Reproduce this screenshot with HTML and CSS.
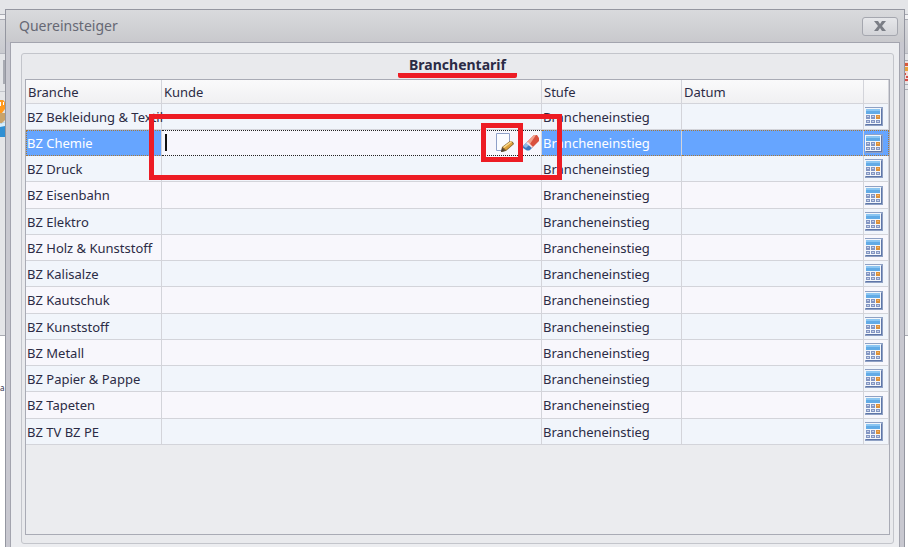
FILE: index.html
```html
<!DOCTYPE html>
<html lang="de">
<head>
    <meta charset="UTF-8">
    <meta name="viewport" content="width=device-width, initial-scale=1.0">
    <title>Quereinsteiger</title>
    <link rel="stylesheet" href="styles.css">
</head>
<body>
    <div class="backdrop left">
        <div class="ribbon"></div>
        <div class="field"></div>
        <svg class="app-icon" width="5" height="46" viewBox="0 0 5 46">
            <path d="M0 0h5v1H0z" fill="#c3c5cb"/>
            <path d="M0 9h3q2 1 2 3v6l-3 4H0z" fill="#ff9a1f"/>
            <path d="M0 11h1v4H0zM3 11h1v3H3z" fill="#fff"/>
            <path d="M0 22h5v7l-3 3H0z" fill="#c9a36a"/>
            <path d="M0 33l5-2v15H0z" fill="#2f8fd3"/>
            <path d="M0 33l5-2v4l-5 1z" fill="#d9eefb"/>
        </svg>
        <div class="document">a</div>
    </div>
    <div class="backdrop right">
        <div class="ribbon"></div>
        <svg class="app-icon" width="4" height="30" viewBox="0 0 4 30">
            <path d="M0 0h4v1H0zM0 24h4v1H0zM0 29h4v1H0z" fill="#a9abb3"/>
            <path d="M0 2h4v20H0z" fill="#f4dcd8"/>
            <path d="M1 3h3v3H1z" fill="#d85a3c"/>
            <path d="M1 7h3v4H1z" fill="#e8a23c"/>
            <path d="M0 13h2v2H0zM2 16h2v2H2zM0 19h4v2H0z" fill="#d4504a"/>
        </svg>
        <div class="document"></div>
    </div>

    <main class="dialog">
        <header class="titlebar">
            <h1>Quereinsteiger</h1>
            <button class="close" type="button" aria-label="Schließen">
                <svg width="12" height="10" viewBox="0 0 12 10">
                    <path d="M0 0h4l2 3 2-3h4L8 5l4 5H8L6 7l-2 3H0l4-5z" fill="#7b7e86"/>
                </svg>
            </button>
        </header>

        <div class="content">
            <section class="panel">
                <h2><span class="marked">Branchentarif</span></h2>
                <div class="grid">
                    <table>
                        <colgroup>
                            <col class="col-branche">
                            <col>
                            <col class="col-stufe">
                            <col class="col-datum">
                            <col class="col-action">
                        </colgroup>
                        <thead>
                            <tr><th>Branche</th><th>Kunde</th><th>Stufe</th><th>Datum</th><th></th></tr>
                        </thead>
                        <tbody id="rows"></tbody>
                    </table>
                </div>
            </section>
        </div>
    </main>

    <template id="calendar">
        <button class="calendar" type="button" aria-label="Datum wählen">
            <svg width="18" height="19" viewBox="0 0 18 19">
                <path d="M0 0h18v19H0z" fill="#8fa1c4"/>
                <path d="M0 1h16v16H0z" fill="#f3f7fc"/>
                <path d="M16 2h1v16H1v-1h15z" fill="#5f76a8"/>
                <path d="M1 2h14v5H1z" fill="#62abe6"/>
                <path d="M1 2h14v2H1z" fill="#8cc6f2"/>
                <path d="M1 8h4v4H1zM6 8h4v4H6zM1 13h4v3H1zM6 13h4v3H6zM11 13h4v3h-4z" fill="#8496c2"/>
                <path d="M2 9h2v1H2zM7 9h2v1H7zM2 14h2v1H2zM7 14h2v1H7zM12 14h2v1h-2z" fill="#c6d1e8"/>
                <path d="M11 8h4v4h-4z" fill="#dc9038"/>
                <path d="M12 9h2v1h-2z" fill="#f0b468"/>
            </svg>
        </button>
    </template>

    <template id="editor">
        <div class="editor">
            <input type="text" aria-label="Kunde">
            <button class="edit" type="button" aria-label="Bearbeiten">
                <svg width="20" height="20" viewBox="0 0 20 20">
                    <path d="M1.500.5h13v10l-6 7h-7z" fill="#fbfcff" stroke="#8fa0c8"/>
                    <path d="M6 19l1-5 8-6q3 0 4 3l-8 7z" fill="#80602c"/>
                    <path d="M8 14l8-6 2 3-7 6z" fill="#dfa23c"/>
                    <path d="M8 14l8-6 1 1-8 6z" fill="#f9dc90"/>
                    <path d="M6 19l1-4 3 3z" fill="#4a4038"/>
                </svg>
            </button>
            <button class="clear" type="button" aria-label="Löschen">
                <svg width="16" height="18" viewBox="0 0 16 18">
                    <path d="M0 12l4-4 6 5-3 3q-2 1-4 0l-3-2z" fill="#3f79bd"/>
                    <path d="M0 12l4-4 3 2-4 4z" fill="#8fb8e4"/>
                    <path d="M4 8l7-7h3l2 3v3l-7 7z" fill="#d9503f"/>
                    <path d="M4 8l7-7h2L7 10z" fill="#f2a08c"/>
                    <path d="M3 9l2-1 5 5-1 1z" fill="#f3e6ea"/>
                </svg>
            </button>
            <span class="highlight outer"></span>
            <span class="highlight inner"></span>
        </div>
    </template>

    <script>
        const branchen = [
            'BZ Bekleidung & Textil', 'BZ Chemie', 'BZ Druck', 'BZ Eisenbahn', 'BZ Elektro',
            'BZ Holz & Kunststoff', 'BZ Kalisalze', 'BZ Kautschuk', 'BZ Kunststoff',
            'BZ Metall', 'BZ Papier & Pappe', 'BZ Tapeten', 'BZ TV BZ PE'
        ];
        const rows = document.getElementById('rows');

        branchen.forEach((name, index) => {
            const row = rows.insertRow();
            row.insertCell().textContent = name;
            const kunde = row.insertCell();
            row.insertCell().textContent = 'Brancheneinstieg';
            row.insertCell();
            row.insertCell().append(document.getElementById('calendar').content.cloneNode(true));
            if (index === 1) {
                row.className = 'selected';
                kunde.append(document.getElementById('editor').content.cloneNode(true));
            }
        });
        document.querySelector('.editor input').focus();
    </script>
</body>
</html>
```
FILE: styles.css
```css
* {
    box-sizing: border-box;
}
body {
    margin: 0;
    height: 100vh;
    padding: 9px 3px 0 5px;
    overflow: hidden;
    font-family: "Noto Sans", sans-serif;
    font-size: 13px;
    color: #2b2b45;
    background: #e4e5e8;
}
h1, h2 {
    margin: 0;
}
button {
    border: 0;
    padding: 0;
    background: none;
}
svg {
    display: block;
}

/* application window behind the dialog */
.backdrop {
    position: absolute;
    top: 0;
    bottom: 0;
    display: flex;
    flex-direction: column;
    overflow: hidden;
}
.left {
    left: 0;
    width: 5px;
}
.right {
    right: 0;
    width: 4px;
}
.ribbon {
    height: 40px;
    margin-top: 14px;
    border-top: 1px solid #a9abb3;
    border-bottom: 1px solid #b4b6be;
    background: linear-gradient(#f2f2f4 4px, #a9abb3 4px, #a9abb3 5px, #d6d7db 5px, #c9cacf);
}
.field {
    height: 24px;
    margin: 6px 0 7px 3px;
    border: 1px solid #a9abb3;
    background: #fff;
}
.document {
    flex: 1;
    margin-top: 198px;
    padding-top: 46px;
    border-top: 1px solid #a9abb3;
    font-size: 8px;
    background: #fff;
}
.right .app-icon {
    margin-top: 6px;
}
.right .document {
    margin-top: 245px;
}

.dialog {
    position: relative;
    display: flex;
    flex-direction: column;
    height: 100%;
    border: 1px solid #9496a0;
    border-bottom: 0;
    background: #c8c8d0;
}
.titlebar {
    display: flex;
    align-items: center;
    justify-content: space-between;
    height: 32px;
    padding: 0 6px 0 13px;
    background: linear-gradient(#d9dadd, #c9c9cd);
}
.titlebar h1 {
    font-size: 14px;
    font-weight: normal;
    line-height: 20px;
    color: #666874;
}
.close {
    display: flex;
    align-items: center;
    justify-content: center;
    width: 36px;
    height: 19px;
    border: 1px solid #a5a7af;
    border-radius: 3px;
    background: linear-gradient(#e6e7ea, #d3d4d8);
}
.content {
    flex: 1;
    display: flex;
    margin: 0 4px;
    padding: 10px 5px 3px 10px;
    border: 1px solid #a3a4ae;
    border-bottom: 0;
    background: #ecedf0;
}
.panel {
    flex: 1;
    display: flex;
    flex-direction: column;
    padding: 0 3px 8px;
    border: 1px solid #c3c5cb;
    border-radius: 3px;
    background: #e9eaed;
}
.panel h2 {
    height: 25px;
    font-size: 14px;
    line-height: 22px;
    text-align: center;
}
.marked {
    display: inline-block;
    height: 24px;
    padding: 0 11px;
    border-bottom: 5px solid #ed1c24;
    border-radius: 2px;
}
.grid {
    flex: 1;
    border: 1px solid #a9abb5;
    background: #ebecef;
}

table {
    width: 100%;
    table-layout: fixed;
    border-collapse: separate;
    border-spacing: 0;
}
.col-branche {
    width: 136px;
}
.col-stufe {
    width: 140px;
}
.col-datum {
    width: 182px;
}
.col-action {
    width: 25px;
}
th, td {
    height: 26px;
    padding: 0 1px;
    border-right: 1px solid #d3d4da;
    border-bottom: 1px solid #d3d4da;
    line-height: 20px;
    text-align: left;
    white-space: nowrap;
}
th {
    height: 24px;
    padding: 0 2px;
    font-weight: normal;
    background: linear-gradient(#fafafb, #f0f0f2);
}
td {
    background: #f8f7fc;
}
tr:nth-child(odd) td {
    background: #f1f5fb;
}
tr:nth-child(4n) td {
    height: 27px;
}
.selected td {
    color: #fff;
    border-top: 1px dotted #a87838;
    border-bottom: 1px dotted #a87838;
    background: #66a5ff;
}
.selected td:first-child {
    padding-left: 0;
    border-left: 1px dotted #a87838;
}
.selected td:last-child {
    border-right: 1px dotted #a87838;
}
.selected td:nth-child(2) {
    padding: 0;
    border-top: 1px dotted #222;
    border-bottom: 1px dotted #222;
    background: #f7f6fc;
}
.calendar {
    display: block;
}

.editor {
    position: relative;
    display: flex;
    align-items: center;
    gap: 8px;
    height: 24px;
    padding-right: 2px;
}
.editor input {
    flex: 1;
    min-width: 0;
    height: 18px;
    padding: 0 3px;
    border: 0;
    outline: 0;
    font: inherit;
    caret-color: transparent;
    background: linear-gradient(#111, #111) 3px 0 / 2px 17px no-repeat;
}
.highlight {
    position: absolute;
    border: 5px solid #ed1c24;
    pointer-events: none;
}
.outer {
    top: -17px;
    right: -21px;
    bottom: -25px;
    left: -13px;
}
.inner {
    top: -8px;
    right: 18px;
    bottom: -7px;
    width: 42px;
}
```
